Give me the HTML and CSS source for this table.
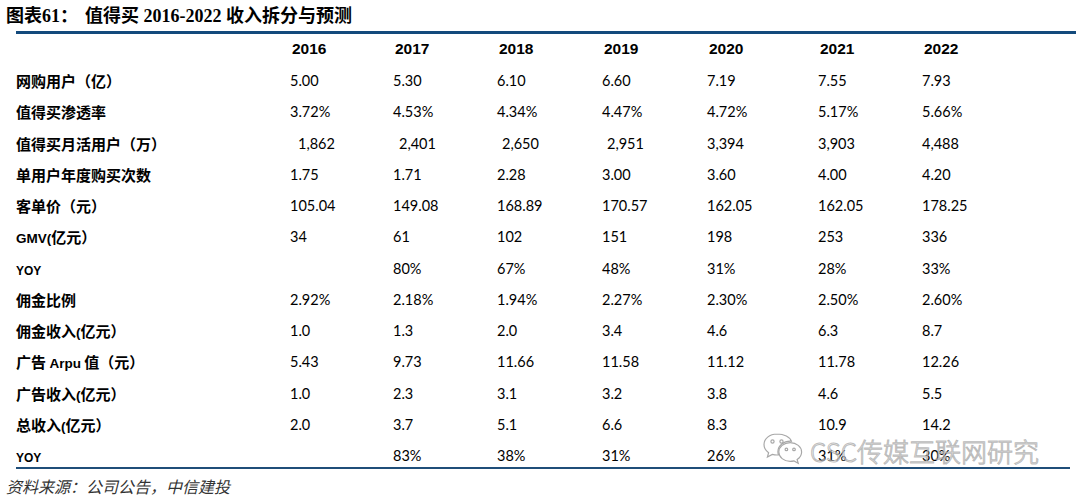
FILE: index.html
```html
<!DOCTYPE html>
<html lang="zh">
<head>
<meta charset="utf-8">
<title>值得买 2016-2022 收入拆分与预测</title>
<link rel="stylesheet" href="styles.css">
</head>
<body>
<div class="page">
  <div class="title"><span class="fig">图表61：</span><span class="name">值得买 2016-2022 收入拆分与预测</span></div>
  <div class="rule"></div>
  <div class="table">
    <div class="row head">
      <div></div><div>2016</div><div>2017</div><div>2018</div><div>2019</div><div>2020</div><div>2021</div><div>2022</div>
    </div>
    <div class="row"><div class="lab">网购用户（亿）</div><div>5.00</div><div>5.30</div><div>6.10</div><div>6.60</div><div>7.19</div><div>7.55</div><div>7.93</div></div>
    <div class="row"><div class="lab">值得买渗透率</div><div>3.72%</div><div>4.53%</div><div>4.34%</div><div>4.47%</div><div>4.72%</div><div>5.17%</div><div>5.66%</div></div>
    <div class="row"><div class="lab">值得买月活用户（万）</div><div class="i8">1,862</div><div class="i6">2,401</div><div class="i5">2,650</div><div class="i5">2,951</div><div>3,394</div><div>3,903</div><div>4,488</div></div>
    <div class="row"><div class="lab">单用户年度购买次数</div><div>1.75</div><div>1.71</div><div>2.28</div><div>3.00</div><div>3.60</div><div>4.00</div><div>4.20</div></div>
    <div class="row"><div class="lab">客单价（元）</div><div>105.04</div><div>149.08</div><div>168.89</div><div>170.57</div><div>162.05</div><div>162.05</div><div>178.25</div></div>
    <div class="row"><div class="lab"><span class="lat">GMV(</span>亿元）</div><div>34</div><div>61</div><div>102</div><div>151</div><div>198</div><div>253</div><div>336</div></div>
    <div class="row"><div class="lab"><span class="yoy">YOY</span></div><div></div><div>80%</div><div>67%</div><div>48%</div><div>31%</div><div>28%</div><div>33%</div></div>
    <div class="row"><div class="lab">佣金比例</div><div>2.92%</div><div>2.18%</div><div>1.94%</div><div>2.27%</div><div>2.30%</div><div>2.50%</div><div>2.60%</div></div>
    <div class="row"><div class="lab">佣金收入<span class="lat">(</span>亿元）</div><div>1.0</div><div>1.3</div><div>2.0</div><div>3.4</div><div>4.6</div><div>6.3</div><div>8.7</div></div>
    <div class="row"><div class="lab">广告 <span class="lat">Arpu</span> 值（元）</div><div>5.43</div><div>9.73</div><div>11.66</div><div>11.58</div><div>11.12</div><div>11.78</div><div>12.26</div></div>
    <div class="row"><div class="lab">广告收入<span class="lat">(</span>亿元）</div><div>1.0</div><div>2.3</div><div>3.1</div><div>3.2</div><div>3.8</div><div>4.6</div><div>5.5</div></div>
    <div class="row"><div class="lab">总收入<span class="lat">(</span>亿元）</div><div>2.0</div><div>3.7</div><div>5.1</div><div>6.6</div><div>8.3</div><div>10.9</div><div>14.2</div></div>
    <div class="row"><div class="lab"><span class="yoy">YOY</span></div><div></div><div>83%</div><div>38%</div><div>31%</div><div>26%</div><div>31%</div><div>30%</div></div>
  </div>
  <div class="source">资料来源：公司公告，中信建投</div>
  <div class="watermark">
    <svg class="wx" width="42" height="38" viewBox="0 0 42 38" fill="none" stroke="#a8a8a8" stroke-width="1.2">
      <path d="M15 2C7.5 2 2 6.8 2 12.6c0 3.3 1.8 6.2 4.6 8.1L5.4 25l4.9-2.6c1.5.4 3 .6 4.7.6.5 0 1 0 1.5-.1-.4-1-.6-2.1-.6-3.2 0-5.9 5.6-10.5 12.4-10.5.4 0 .8 0 1.1.1C28 4.8 22.1 2 15 2z"/>
      <circle cx="10.5" cy="9.5" r="1.6"/>
      <circle cx="19.5" cy="9.5" r="1.6"/>
      <path d="M28.2 10.6c-6.3 0-11.4 4.2-11.4 9.4s5.1 9.4 11.4 9.4c1.3 0 2.6-.2 3.8-.5l4.2 2.3-1.1-3.7c2.7-1.7 4.5-4.4 4.5-7.5 0-5.2-5.1-9.4-11.4-9.4z"/>
      <circle cx="24.4" cy="17.4" r="1.3"/>
      <circle cx="32" cy="17.4" r="1.3"/>
    </svg>
    <span class="wmtext">CSC传媒互联网研究</span>
  </div>
</div>
</body>
</html>
```

FILE: styles.css
```css
html, body {
  margin: 0;
  padding: 0;
  background: #ffffff;
}

.page {
  position: relative;
  width: 1076px;
  height: 498px;
  overflow: hidden;
  color: #000;
}

.title {
  height: 31px;
  padding-left: 6px;
  box-sizing: border-box;
  padding-top: 4px;
  font-family: "Liberation Serif", "Noto Sans CJK SC", serif;
  font-weight: bold;
  font-size: 18px;
  line-height: 24px;
  white-space: pre;
}

.title .fig {
  margin-right: 7px;
}

.rule {
  margin-left: 16px;
  height: 3px;
  background: #134a7c;
}

.table {
  margin-left: 16px;
  width: 1054px;
  border-bottom: 2px solid #1f4e79;
}

.row {
  display: grid;
  grid-template-columns: 274px 103px 104px 105px 105px 111px 104px 1fr;
  height: 31.25px;
  box-sizing: border-box;
  padding-top: 10px;
  font-family: "Lato", "Liberation Sans", sans-serif;
  font-size: 14.5px;
  line-height: 20px;
  white-space: nowrap;
}

.row.head {
  height: 27px;
  padding-top: 5px;
  font-family: "Liberation Sans Narrow", "Liberation Sans", sans-serif;
  font-stretch: condensed;
  font-weight: bold;
  font-size: 15.5px;
}

.row.head > div {
  padding-left: 2px;
}

.lab {
  font-family: "Noto Sans CJK SC", sans-serif;
  font-weight: bold;
  font-size: 15px;
}

.lab .lat {
  font-family: "Liberation Sans", sans-serif;
  font-weight: bold;
  font-size: 13.5px;
}

.lab .yoy {
  font-family: "Liberation Sans", sans-serif;
  font-weight: bold;
  font-size: 12px;
}

.i8 { padding-left: 8px; }
.i6 { padding-left: 6px; }
.i5 { padding-left: 5px; }

.source {
  padding-left: 6px;
  padding-top: 8px;
  font-family: "Noto Sans CJK SC", sans-serif;
  font-style: italic;
  font-size: 16px;
  line-height: 18px;
  color: #333;
}

.watermark {
  position: absolute;
  left: 762px;
  top: 432px;
  display: flex;
  align-items: center;
  gap: 6px;
  pointer-events: none;
}

.wmtext {
  font-family: "Noto Sans CJK SC", sans-serif;
  font-weight: 300;
  font-size: 26px;
  line-height: 34px;
  color: rgba(255, 255, 255, 0.6);
  -webkit-text-stroke: 1px rgba(140, 140, 140, 0.6);
}
```
